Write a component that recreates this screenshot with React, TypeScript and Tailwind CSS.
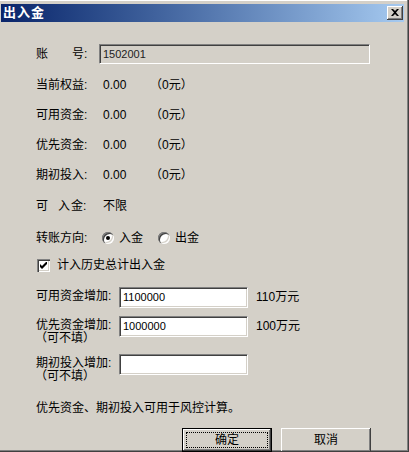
import { FC, ReactNode } from "react"

const sunken =
  "border border-t-[#808080] border-l-[#808080] border-r-white border-b-white shadow-[inset_1px_1px_#404040,inset_-1px_-1px_#d4d0c8]"

const InfoRow: FC<{ label: ReactNode; value: string; yuan?: string; h: string }> = ({ label, value, yuan, h }) => (
  <div className={`flex items-center ${h}`}>
    <div className="w-[67px]">{label}</div>
    <div className="w-[47px]">{value}</div>
    {yuan && <div>{yuan}</div>}
  </div>
)

const Radio: FC<{ checked?: boolean }> = ({ checked }) => (
  <span className="relative inline-flex size-[12px] items-center justify-center rounded-full bg-white shadow-[inset_1px_1px_#808080,inset_2px_2px_#404040,inset_-1px_-1px_#fff,inset_-2px_-2px_#d4d0c8]">
    {checked && <span className="size-[4px] rounded-full bg-black" />}
  </span>
)

const AmountRow: FC<{ label: string; sub?: boolean; value: string; hint?: string; cls: string }> = ({ label, sub, value, hint, cls }) => (
  <div className={`flex ${cls}`}>
    <div className="w-[83px] pt-[3px] leading-[13px]">
      <div>{label}</div>
      {sub && <div className="-ml-[1px]">（可不填）</div>}
    </div>
    <div className={`w-[129px] h-[21px] bg-white pl-[3px] text-[11px] leading-[19px] ${sunken}`}>{value}</div>
    {hint && <div className="ml-[8px] leading-[21px]">{hint}</div>}
  </div>
)

const App: FC = () => {
  return (
    <div className="w-[409px] h-[452px] overflow-hidden bg-[#d4d0c8] pt-[4px] pl-[1px] pr-[5px] shadow-[inset_-1px_-1px_#404040,inset_-2px_-2px_#808080,inset_0_1px_#fff] font-['Liberation_Sans','Noto_Sans_CJK_SC',sans-serif] text-[12px] text-black">
      <div className="flex h-[18px] items-center justify-between bg-linear-to-r from-[#0a246a] to-[#a6caf0] pl-[2px] pr-[1px]">
        <span className="font-bold text-[13px] leading-[18px] text-white tracking-[1px]">出入金</span>
        <div className="flex h-[14px] w-[16px] items-center justify-center bg-[#d4d0c8] shadow-[inset_-1px_-1px_#404040,inset_1px_1px_#fff,inset_-2px_-2px_#808080]">
          <svg width="8" height="7" viewBox="0 0 8 7" className="mb-[1px]">
            <path d="M0 0h2l2 2 2-2h2L5 3.5 8 7H6L4 5 2 7H0l3-3.5z" fill="#000" />
          </svg>
        </div>
      </div>

      <div className="pl-[35px]">
        <div className="mt-[22px] flex h-[20px] items-center">
          <div className="flex w-[63px]">
            <span>账</span>
            <span className="ml-[24px]">号:</span>
          </div>
          <div className={`h-[20px] w-[271px] bg-[#d4d0c8] pl-[3px] text-[11px] leading-[18px] text-[#222] ${sunken}`}>1502001</div>
        </div>

        <div className="mt-[6px]">
          <InfoRow h="h-[30px]" label="当前权益:" value="0.00" yuan="（0元）" />
          <InfoRow h="h-[30px]" label="可用资金:" value="0.00" yuan="（0元）" />
          <InfoRow h="h-[30px]" label="优先资金:" value="0.00" yuan="（0元）" />
          <InfoRow h="h-[30px]" label="期初投入:" value="0.00" yuan="（0元）" />
          <InfoRow
            h="h-[32px]"
            label={
              <span className="flex">
                <span>可</span>
                <span className="ml-[10px]">入</span>
                <span className="ml-[1px]">金:</span>
              </span>
            }
            value="不限"
          />
        </div>

        <div className="flex h-[32px] items-center">
          <div className="w-[66px]">转账方向:</div>
          <Radio checked />
          <span className="ml-[5px]">入金</span>
          <span className="ml-[15px]" />
          <Radio />
          <span className="ml-[5px]">出金</span>
        </div>

        <div className="flex h-[22px] items-center">
          <span className="ml-[1px] flex size-[13px] items-center justify-center bg-white shadow-[inset_1px_1px_#808080,inset_2px_2px_#404040,inset_-1px_-1px_#fff,inset_-2px_-2px_#d4d0c8]">
            <svg width="7" height="7" viewBox="0 0 7 7">
              <path d="M0 2v3l2 2 5-5V-1L2 4z" fill="#000" />
            </svg>
          </span>
          <span className="ml-[7px]">计入历史总计出入金</span>
        </div>

        <AmountRow cls="mt-[11px]" label="可用资金增加:" value="1100000" hint="110万元" />
        <AmountRow cls="mt-[8px]" label="优先资金增加:" sub value="1000000" hint="100万元" />
        <AmountRow cls="mt-[9px]" label="期初投入增加:" sub value="" />

        <div className="mt-[15px] h-[20px] leading-[20px]">优先资金、期初投入可用于风控计算。</div>

        <div className="mt-[10px] flex pl-[146px]">
          <button className="h-[24px] w-[90px] border border-black bg-[#d4d0c8] p-[3px] shadow-[inset_-1px_-1px_#404040,inset_1px_1px_#fff,inset_-2px_-2px_#808080]">
            <span className="flex h-full w-full items-center justify-center border border-dotted border-black">确定</span>
          </button>
          <button className="ml-[9px] h-[24px] w-[90px] bg-[#d4d0c8] shadow-[inset_-1px_-1px_#404040,inset_1px_1px_#fff,inset_-2px_-2px_#808080]">
            取消
          </button>
        </div>
      </div>
    </div>
  )
}

export default App
